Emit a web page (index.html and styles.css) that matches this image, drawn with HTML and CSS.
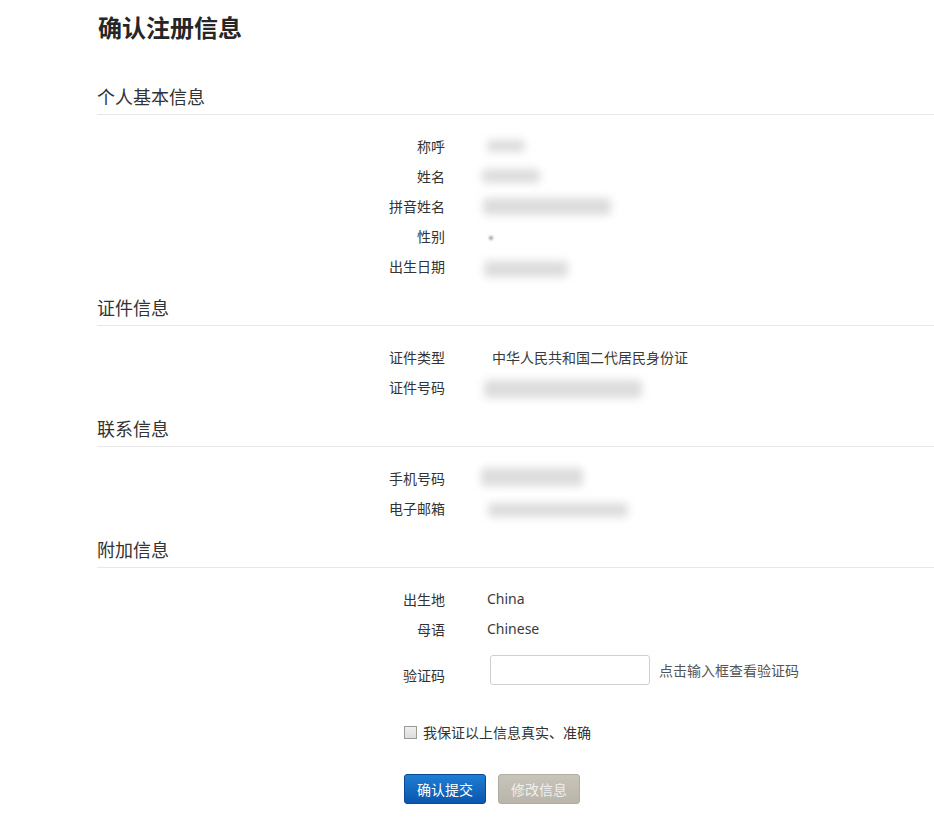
FILE: index.html
```html
<!DOCTYPE html>
<html lang="zh-CN">
<head>
<meta charset="utf-8">
<title>确认注册信息</title>
<link rel="stylesheet" href="styles.css">
</head>
<body>
<div class="page">
  <h1 class="title">确认注册信息</h1>

  <section class="section">
    <h2 class="section-head">个人基本信息</h2>
    <div class="rows">
      <div class="row"><span class="label">称呼</span><span class="value"><span class="blur b-salute"></span></span></div>
      <div class="row"><span class="label">姓名</span><span class="value"><span class="blur b-name"></span></span></div>
      <div class="row"><span class="label">拼音姓名</span><span class="value"><span class="blur b-pinyin"></span></span></div>
      <div class="row"><span class="label">性别</span><span class="value"><span class="blur b-dot"></span></span></div>
      <div class="row"><span class="label">出生日期</span><span class="value"><span class="blur b-date"></span></span></div>
    </div>
  </section>

  <section class="section">
    <h2 class="section-head">证件信息</h2>
    <div class="rows">
      <div class="row"><span class="label">证件类型</span><span class="value value-cjk">中华人民共和国二代居民身份证</span></div>
      <div class="row"><span class="label">证件号码</span><span class="value"><span class="blur b-id"></span></span></div>
    </div>
  </section>

  <section class="section">
    <h2 class="section-head">联系信息</h2>
    <div class="rows">
      <div class="row"><span class="label">手机号码</span><span class="value"><span class="blur b-phone"></span></span></div>
      <div class="row"><span class="label">电子邮箱</span><span class="value"><span class="blur b-mail"></span></span></div>
    </div>
  </section>

  <section class="section">
    <h2 class="section-head">附加信息</h2>
    <div class="rows rows-extra">
      <div class="row"><span class="label">出生地</span><span class="value">China</span></div>
      <div class="row"><span class="label">母语</span><span class="value">Chinese</span></div>
      <div class="row row-captcha">
        <span class="label label-captcha">验证码</span>
        <span class="captcha-field"><input class="captcha-input" type="text"></span>
        <span class="captcha-hint">点击输入框查看验证码</span>
      </div>
      <label class="agree"><span class="checkbox"></span><span>我保证以上信息真实、准确</span></label>
      <div class="actions">
        <button class="btn btn-primary" type="button">确认提交</button>
        <button class="btn btn-secondary" type="button">修改信息</button>
      </div>
    </div>
  </section>
</div>
</body>
</html>
```

FILE: styles.css
```css
html, body {
  margin: 0;
  padding: 0;
  background: #ffffff;
}

body {
  font-family: "Noto Sans", "Noto Sans CJK SC", sans-serif;
  color: #333333;
  font-size: 14px;
}

.page {
  padding-left: 97px;
}

.title {
  margin: 12px 0 42px 1px;
  font-size: 24px;
  line-height: 30px;
  font-weight: bold;
  color: #262626;
  font-family: "Noto Sans CJK SC", sans-serif;
}

.section-head {
  margin: 0;
  font-size: 18px;
  line-height: 24px;
  font-weight: normal;
  color: #333333;
  font-family: "Noto Sans CJK SC", sans-serif;
  padding-bottom: 6px;
  border-bottom: 1px solid #e8e8e8;
}

.rows {
  padding: 16px 0 14px;
}

.row {
  display: flex;
  align-items: center;
  height: 30px;
}

.label {
  width: 348px;
  flex: none;
  text-align: right;
  font-family: "Noto Sans CJK SC", sans-serif;
  font-size: 14px;
  line-height: 30px;
  color: #333333;
}

.value {
  margin-left: 42px;
  font-size: 14px;
  line-height: 30px;
  color: #3a3a3a;
  display: flex;
  align-items: center;
}

.value-cjk {
  margin-left: 47px;
  font-family: "Noto Sans CJK SC", sans-serif;
}

.blur {
  display: inline-block;
  background: #dcdcdc;
  filter: blur(4px);
  border-radius: 4px;
}

.b-salute { width: 38px; height: 12px; margin-left: 0; margin-top: -1px; }
.b-name { width: 58px; height: 14px; margin-left: -5px; }
.b-pinyin { width: 128px; height: 17px; margin-left: -4px; }
.b-dot { width: 4px; height: 4px; margin-left: 2px; margin-top: 4px; background: #999999; filter: blur(1px); }
.b-date { width: 84px; height: 16px; margin-left: -3px; margin-top: 6px; }
.b-id { width: 158px; height: 18px; margin-left: -3px; margin-top: 4px; }
.b-phone { width: 102px; height: 18px; margin-left: -6px; margin-top: -2px; }
.b-mail { width: 140px; height: 14px; margin-left: 1px; margin-top: 3px; }

.row-captcha {
  margin-top: 11px;
  align-items: flex-start;
}

.label-captcha {
  padding-top: 5px;
}

.captcha-field {
  margin-left: 45px;
  display: flex;
}

.captcha-input {
  box-sizing: border-box;
  width: 160px;
  height: 30px;
  border: 1px solid #cfcfcf;
  border-radius: 3px;
  margin: 0;
  padding: 0 6px;
  background: #ffffff;
}

.captcha-hint {
  margin-left: 9px;
  font-family: "Noto Sans CJK SC", sans-serif;
  font-size: 14px;
  line-height: 30px;
  color: #555555;
}

.agree {
  display: flex;
  align-items: center;
  margin: 32px 0 0 307px;
  height: 30px;
  font-family: "Noto Sans CJK SC", sans-serif;
  font-size: 14px;
  color: #333333;
}

.checkbox {
  box-sizing: border-box;
  width: 13px;
  height: 13px;
  border: 1px solid #9a9a9a;
  background: linear-gradient(#f0f0f0, #dcdcdc);
  margin-right: 6px;
}

.actions {
  display: flex;
  gap: 12px;
  margin: 27px 0 0 307px;
}

.btn {
  box-sizing: border-box;
  width: 82px;
  height: 30px;
  border-radius: 3px;
  font-family: "Noto Sans CJK SC", sans-serif;
  font-size: 14px;
  padding: 0;
  cursor: pointer;
}

.btn-primary {
  background: linear-gradient(#1f7ed3, #0a56ad);
  border: 1px solid #0a4a94;
  color: #ffffff;
}

.btn-secondary {
  background: linear-gradient(#c8c4ba, #b9b5ab);
  border: 1px solid #b0aca2;
  color: #efefef;
}
```
